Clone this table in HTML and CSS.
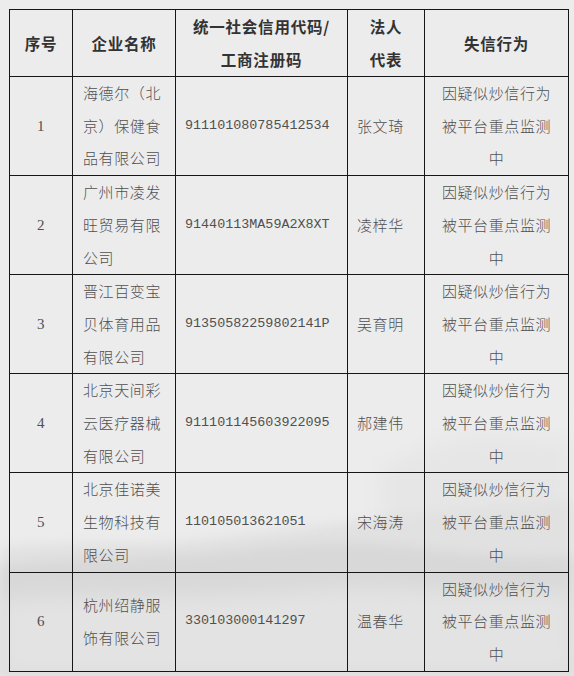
FILE: index.html
```html
<!DOCTYPE html>
<html lang="zh-CN">
<head>
<meta charset="utf-8">
<title>失信企业名单</title>
<link rel="stylesheet" href="styles.css">
</head>
<body>
<div class="page">
  <svg class="landscape" width="574" height="676" viewBox="0 0 574 676" aria-hidden="true">
    <defs>
      <filter id="soft" x="-10%" y="-50%" width="120%" height="200%"><feGaussianBlur stdDeviation="6"/></filter>
      <filter id="softer" x="-10%" y="-50%" width="120%" height="200%"><feGaussianBlur stdDeviation="10"/></filter>
    </defs>
    <path d="M380 470 C 430 440, 480 430, 520 438 C 545 442, 560 440, 574 436 L574 676 L380 676 Z" fill="#e6e6e6" filter="url(#softer)"/>
    <path d="M0 548 C 60 540, 120 548, 200 540 C 260 534, 320 525, 380 518 C 440 512, 500 505, 574 500 L574 676 L0 676 Z" fill="#e1e1e1" filter="url(#soft)"/>
    <path d="M0 566 C 80 556, 160 560, 240 550 C 300 544, 360 540, 420 548 C 480 556, 530 560, 574 556 L574 676 L0 676 Z" fill="#d8d8d8" filter="url(#soft)"/>
    <path d="M0 600 C 100 592, 200 600, 300 590 C 400 582, 480 596, 574 590 L574 676 L0 676 Z" fill="#e3e3e3" filter="url(#softer)"/>
  </svg>
  <table class="grid">
    <colgroup>
      <col class="c-no">
      <col class="c-name">
      <col class="c-code">
      <col class="c-rep">
      <col class="c-act">
    </colgroup>
    <thead>
      <tr>
        <th>序号</th>
        <th>企业名称</th>
        <th>统一社会信用代码/<br>工商注册码</th>
        <th>法人<br>代表</th>
        <th>失信行为</th>
      </tr>
    </thead>
    <tbody>
      <tr>
        <td class="no">1</td>
        <td class="name">海德尔（北京）保健食品有限公司</td>
        <td class="code">911101080785412534</td>
        <td class="rep">张文琦</td>
        <td class="act">因疑似炒信行为被平台重点监测中</td>
      </tr>
      <tr>
        <td class="no">2</td>
        <td class="name">广州市凌发旺贸易有限公司</td>
        <td class="code">91440113MA59A2X8XT</td>
        <td class="rep">凌梓华</td>
        <td class="act">因疑似炒信行为被平台重点监测中</td>
      </tr>
      <tr>
        <td class="no">3</td>
        <td class="name">晋江百变宝贝体育用品有限公司</td>
        <td class="code">91350582259802141P</td>
        <td class="rep">吴育明</td>
        <td class="act">因疑似炒信行为被平台重点监测中</td>
      </tr>
      <tr>
        <td class="no">4</td>
        <td class="name">北京天间彩云医疗器械有限公司</td>
        <td class="code">911101145603922095</td>
        <td class="rep">郝建伟</td>
        <td class="act">因疑似炒信行为被平台重点监测中</td>
      </tr>
      <tr>
        <td class="no">5</td>
        <td class="name">北京佳诺美生物科技有限公司</td>
        <td class="code">110105013621051</td>
        <td class="rep">宋海涛</td>
        <td class="act">因疑似炒信行为被平台重点监测中</td>
      </tr>
      <tr>
        <td class="no">6</td>
        <td class="name">杭州绍静服饰有限公司</td>
        <td class="code">330103000141297</td>
        <td class="rep">温春华</td>
        <td class="act">因疑似炒信行为被平台重点监测中</td>
      </tr>
    </tbody>
  </table>
</div>
</body>
</html>
```

FILE: styles.css
```css
html, body {
  margin: 0;
  padding: 0;
  background: #ededed;
}

.page {
  position: relative;
  width: 574px;
  height: 676px;
  overflow: hidden;
  background: #ececec;
  box-sizing: border-box;
  padding: 9px 0 0 9px;
  font-family: "Noto Sans CJK SC", sans-serif;
  color: #505050;
}

.landscape {
  position: absolute;
  left: 0;
  top: 0;
}

.grid {
  position: relative;
  border-collapse: collapse;
  table-layout: fixed;
  width: 559px;
}

.c-no { width: 63px; }
.c-name { width: 103px; }
.c-code { width: 172px; }
.c-rep { width: 77px; }
.c-act { width: 144px; }

.grid th,
.grid td {
  border: 1px solid #161616;
  vertical-align: middle;
  padding: 0;
}

.grid th {
  height: 66px;
  font-size: 15.5px;
  font-weight: 700;
  color: #333;
  line-height: 33px;
  letter-spacing: 0.8px;
  text-align: center;
}

.grid td {
  height: 98px;
  font-size: 15px;
  font-weight: 300;
  line-height: 32.7px;
  letter-spacing: 0.6px;
}

.no {
  text-align: center;
  font-family: "Liberation Serif", serif;
  font-size: 14px;
}

.name {
  padding: 0 9px 0 10px !important;
}

.code {
  padding-left: 9px !important;
  font-family: "Liberation Mono", monospace;
  font-size: 13.4px !important;
  letter-spacing: 0 !important;
}

.rep {
  padding-left: 9px !important;
}

.act {
  text-align: center;
  padding: 0 12px !important;
}
```
